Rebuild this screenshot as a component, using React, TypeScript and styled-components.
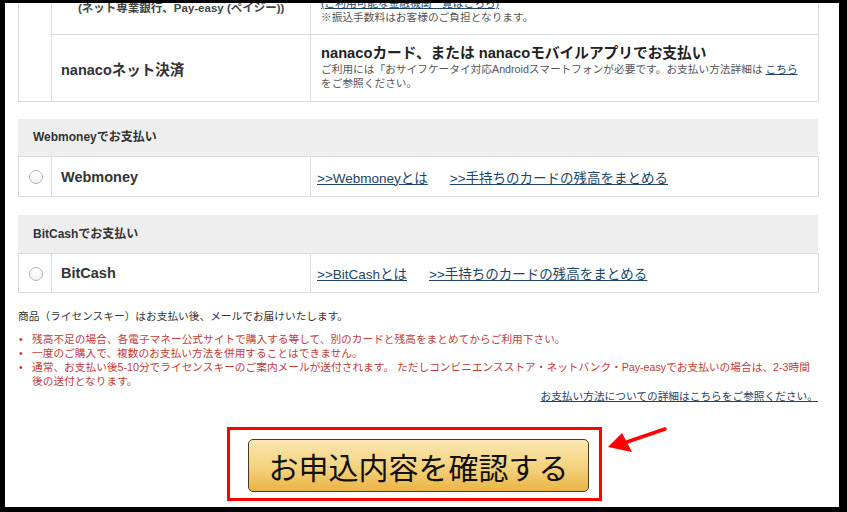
import styled, { createGlobalStyle } from "styled-components";

const GlobalStyle = createGlobalStyle`
  html, body {
    margin: 0;
    background: #000;
  }
  body {
    font-family: "Liberation Sans", "Noto Sans CJK JP", sans-serif;
    color: #333;
  }
`;

const Frame = styled.div`
  box-sizing: border-box;
  width: 847px;
  height: 512px;
  padding: 3px 8px 5px 5px;
`;

const Panel = styled.main`
  box-sizing: border-box;
  height: 100%;
  background: #fff;
  overflow: hidden;
  padding: 0 21px 0 13px;
`;

const Table = styled.table<{ $offset?: number }>`
  width: 800px;
  border-collapse: collapse;
  table-layout: fixed;
  margin-top: ${(p) => p.$offset ?? 0}px;
`;

const Row = styled.tr<{ $h: number }>`
  height: ${(p) => p.$h}px;
`;

const Cell = styled.td<{ $align?: string }>`
  border: 1px solid #ddd;
  padding: 0;
  vertical-align: ${(p) => p.$align ?? "middle"};
`;

const RadioCell = styled(Cell)`
  text-align: center;
`;

const Radio = styled.span`
  display: inline-block;
  box-sizing: border-box;
  width: 14px;
  height: 14px;
  margin-left: 2px;
  border: 1px solid #b5b5b5;
  border-radius: 50%;
  background: linear-gradient(#fff, #f1f1f1);
  vertical-align: middle;
`;

const Label = styled.div`
  padding-left: 9px;
  font-size: 14.5px;
  font-weight: bold;
  color: #333;
`;

const SubLabel = styled.div`
  padding: 0 0 18px 26px;
  font-size: 11.5px;
  line-height: 16px;
  font-weight: bold;
  color: #444;
`;

const Detail = styled.div<{ $pad: string }>`
  padding: ${(p) => p.$pad};
`;

const DetailTitle = styled.div`
  font-size: 14.7px;
  line-height: 18px;
  font-weight: bold;
  color: #222;
`;

const Small = styled.div`
  font-size: 10.7px;
  line-height: 14px;
  color: #555;
`;

const Link = styled.a<{ $size?: number }>`
  color: #1d4466;
  text-decoration: underline;
  font-size: ${(p) => p.$size ?? 10.7}px;
  cursor: pointer;
`;

const LinkCell = styled(Cell)`
  padding-left: 6px;
  & > a + a {
    margin-left: 22px;
  }
`;

const Section = styled.section<{ $gap: number }>`
  margin-top: ${(p) => p.$gap}px;
`;

const SectionHead = styled.h3<{ $h: number }>`
  margin: 0;
  height: ${(p) => p.$h}px;
  line-height: ${(p) => p.$h}px;
  padding-left: 15px;
  background: #eee;
  font-size: 12px;
  font-weight: bold;
  color: #333;
`;

const Intro = styled.p`
  margin: 16px 0 0;
  font-size: 10.7px;
  line-height: 14px;
  color: #333;
`;

const Notes = styled.ul`
  margin: 9px 0 0;
  padding: 0;
  list-style: none;
`;

const Note = styled.li`
  position: relative;
  padding-left: 14px;
  font-size: 10.7px;
  line-height: 14px;
  color: #c23b3b;
  &::before {
    content: "•";
    position: absolute;
    left: 1px;
    top: 0;
  }
`;

const MoreInfo = styled.p`
  margin: 0;
  text-align: right;
  line-height: 14px;
`;

const ConfirmArea = styled.div`
  display: flex;
  margin-top: 24px;
  padding-left: 209px;
`;

const RedBox = styled.div`
  position: relative;
  border: 3px solid #ff0000;
  padding: 9px 10px 6px 18px;
`;

const ConfirmButton = styled.button`
  display: block;
  box-sizing: border-box;
  width: 341px;
  height: 53px;
  padding: 0;
  border: 1px solid #4a3b1e;
  border-radius: 5px;
  background: linear-gradient(#fbe7b3 0%, #f4d27c 55%, #e9b445 100%);
  font-family: "Noto Sans CJK JP", sans-serif;
  font-size: 30px;
  line-height: 1;
  color: #111;
  cursor: pointer;
`;

const Arrow = styled.svg`
  position: absolute;
  left: 374px;
  top: -13px;
`;

type Method = { name: string; head: string; about: string };

const methods: Method[] = [
  { name: "Webmoney", head: "Webmoneyでお支払い", about: ">>Webmoneyとは" },
  { name: "BitCash", head: "BitCashでお支払い", about: ">>BitCashとは" },
];

function Cols() {
  return (
    <colgroup>
      <col style={{ width: 33 }} />
      <col style={{ width: 259 }} />
      <col style={{ width: 508 }} />
    </colgroup>
  );
}

function MethodSection({ m, gap, headH, rowH }: { m: Method; gap: number; headH: number; rowH: number }) {
  return (
    <Section $gap={gap}>
      <SectionHead $h={headH}>{m.head}</SectionHead>
      <Table>
        <Cols />
        <tbody>
          <Row $h={rowH}>
            <RadioCell>
              <Radio />
            </RadioCell>
            <Cell>
              <Label>{m.name}</Label>
            </Cell>
            <LinkCell>
              <Link $size={13.5}>{m.about}</Link>
              <Link $size={13.5}>&gt;&gt;手持ちのカードの残高をまとめる</Link>
            </LinkCell>
          </Row>
        </tbody>
      </Table>
    </Section>
  );
}

export default function App() {
  return (
    <>
      <GlobalStyle />
      <Frame>
        <Panel>
          <Table $offset={-19}>
            <Cols />
            <tbody>
              <Row $h={50}>
                <Cell rowSpan={2} />
                <Cell $align="bottom">
                  <SubLabel>(ネット専業銀行、Pay-easy (ペイジー))</SubLabel>
                </Cell>
                <Cell $align="bottom">
                  <Detail $pad="0 10px 10px">
                    <Small>
                      <Link>(ご利用可能な金融機関一覧はこちら)</Link>
                    </Small>
                    <Small>※振込手数料はお客様のご負担となります。</Small>
                  </Detail>
                </Cell>
              </Row>
              <Row $h={67}>
                <Cell>
                  <Label>nanacoネット決済</Label>
                </Cell>
                <Cell>
                  <Detail $pad="8px 10px 10px">
                    <DetailTitle>nanacoカード、または nanacoモバイルアプリでお支払い</DetailTitle>
                    <Small>
                      ご利用には「おサイフケータイ対応Androidスマートフォンが必要です。お支払い方法詳細は{" "}
                      <Link>こちら</Link>
                      <br />
                      をご参照ください。
                    </Small>
                  </Detail>
                </Cell>
              </Row>
            </tbody>
          </Table>

          <MethodSection m={methods[0]} gap={17} headH={37} rowH={40} />
          <MethodSection m={methods[1]} gap={18} headH={38} rowH={39} />

          <Intro>商品（ライセンスキー）はお支払い後、メールでお届けいたします。</Intro>
          <Notes>
            <Note>残高不足の場合、各電子マネー公式サイトで購入する等して、別のカードと残高をまとめてからご利用下さい。</Note>
            <Note>一度のご購入で、複数のお支払い方法を併用することはできません。</Note>
            <Note>
              通常、お支払い後5-10分でライセンスキーのご案内メールが送付されます。
              ただしコンビニエンスストア・ネットバンク・Pay-easyでお支払いの場合は、2-3時間後の送付となります。
            </Note>
          </Notes>
          <MoreInfo>
            <Link>お支払い方法についての詳細はこちらをご参照ください。</Link>
          </MoreInfo>

          <ConfirmArea>
            <RedBox>
              <ConfirmButton>お申込内容を確認する</ConfirmButton>
              <Arrow width="66" height="40" viewBox="0 0 66 40">
                <line x1="61" y1="12" x2="20" y2="26" stroke="#f00" strokeWidth="3.5" strokeLinecap="round" />
                <polygon points="4,30 18,16 28,35" fill="#f00" />
              </Arrow>
            </RedBox>
          </ConfirmArea>
        </Panel>
      </Frame>
    </>
  );
}
